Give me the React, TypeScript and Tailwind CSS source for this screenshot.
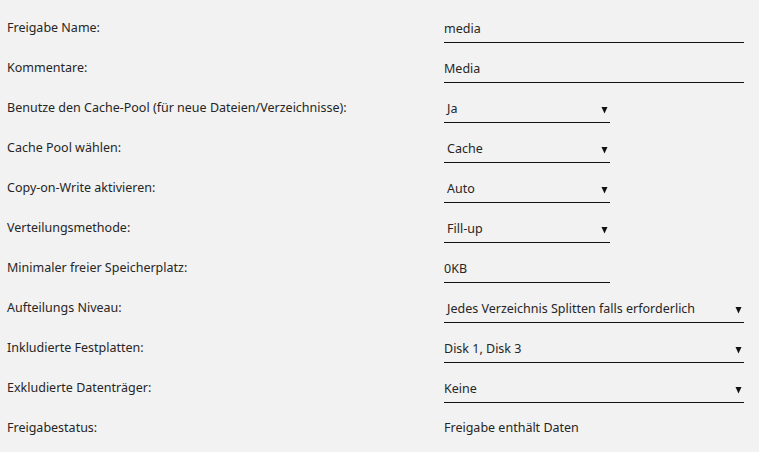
import React from "react";

type Row = {
  label: string;
  value: string;
  kind: "input" | "select" | "text";
  wide?: boolean;
  pad?: boolean;
};

const rows: Row[] = [
  { label: "Freigabe Name:", value: "media", kind: "input", wide: true },
  { label: "Kommentare:", value: "Media", kind: "input", wide: true },
  { label: "Benutze den Cache-Pool (für neue Dateien/Verzeichnisse):", value: "Ja", kind: "select", pad: true },
  { label: "Cache Pool wählen:", value: "Cache", kind: "select", pad: true },
  { label: "Copy-on-Write aktivieren:", value: "Auto", kind: "select", pad: true },
  { label: "Verteilungsmethode:", value: "Fill-up", kind: "select", pad: true },
  { label: "Minimaler freier Speicherplatz:", value: "0KB", kind: "input" },
  { label: "Aufteilungs Niveau:", value: "Jedes Verzeichnis Splitten falls erforderlich", kind: "select", wide: true, pad: true },
  { label: "Inkludierte Festplatten:", value: "Disk 1, Disk 3", kind: "select", wide: true },
  { label: "Exkludierte Datenträger:", value: "Keine", kind: "select", wide: true },
  { label: "Freigabestatus:", value: "Freigabe enthält Daten", kind: "text" },
];

function Arrow() {
  return (
    <svg width="7" height="8" viewBox="0 0 7 8" className="shrink-0">
      <path d="M0.5 1 H6.5 L3.5 7.5 Z" fill="#111" />
    </svg>
  );
}

export default function App() {
  return (
    <div
      className="w-[759px] h-[452px] bg-[#f2f2f2] text-[#262626] text-[12.5px] pt-[8px] overflow-hidden"
      style={{ fontFamily: '"Noto Sans", "Open Sans", Arial, sans-serif' }}
    >
      {rows.map((r) => (
        <div key={r.label} className="flex items-center h-[40px]">
          <div className="w-[444px] pl-[7px] shrink-0">{r.label}</div>
          {r.kind === "text" ? (
            <div>{r.value}</div>
          ) : (
            <div
              className={`flex items-center justify-between h-[28px] pt-[2px] mt-[2px] border-b border-[#111] ${
                r.wide ? "w-[300px]" : "w-[166px]"
              } ${r.pad ? "pl-[3px]" : ""} pr-[2px]`}
            >
              <span>{r.value}</span>
              {r.kind === "select" && <Arrow />}
            </div>
          )}
        </div>
      ))}
    </div>
  );
}
